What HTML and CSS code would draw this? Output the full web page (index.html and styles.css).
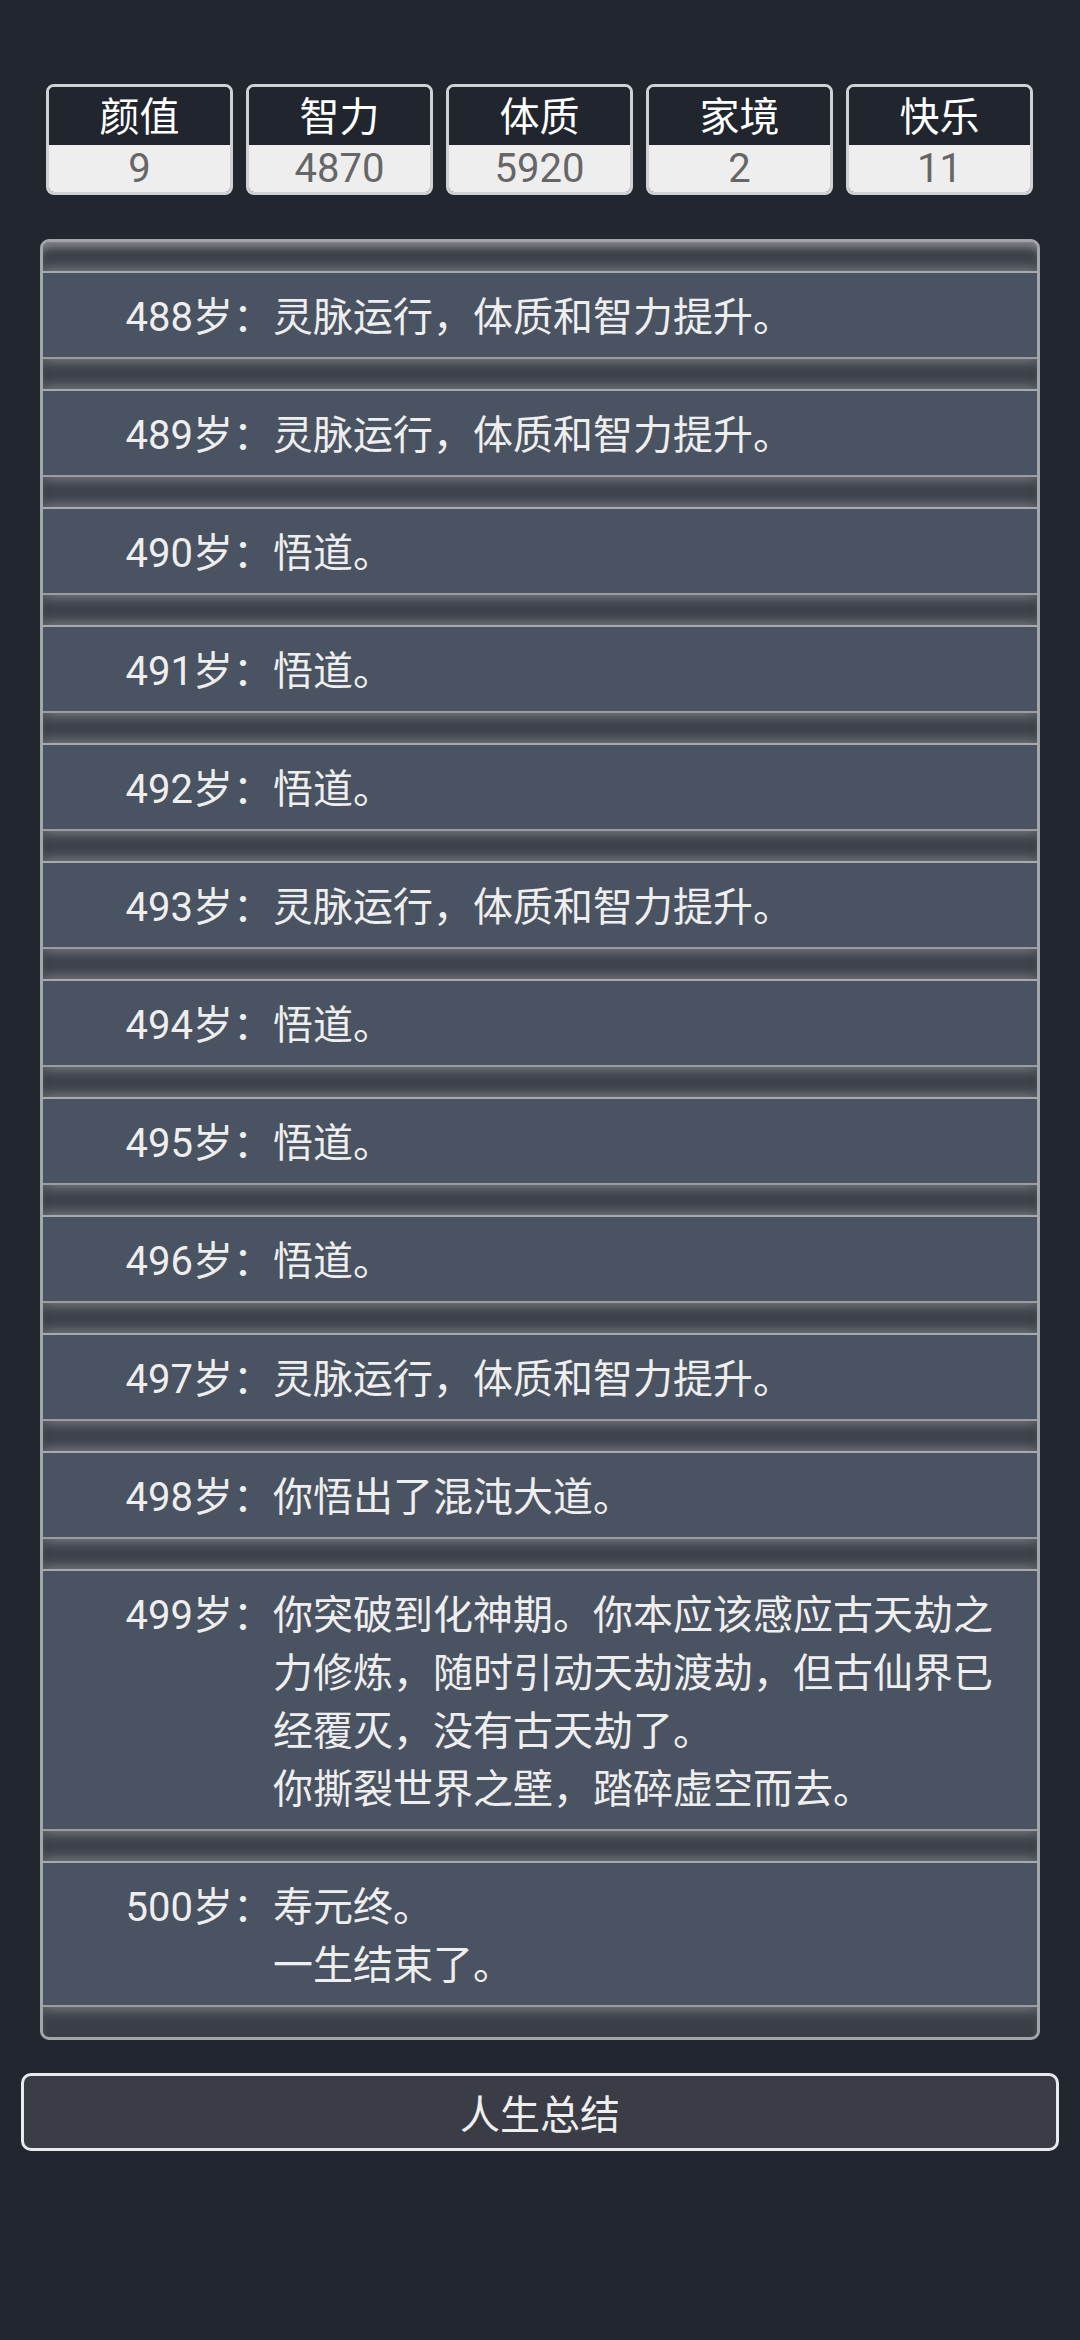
FILE: index.html
```html
<!DOCTYPE html>
<html lang="zh-CN">
<head>
<meta charset="UTF-8" />
<meta name="viewport" content="width=device-width, initial-scale=1" />
<title>人生重开模拟器</title>
<link rel="stylesheet" href="styles.css">
</head>
<body>
<main class="app">
  <div class="stats">
    <div class="stat">
      <div class="stat-name">颜值</div>
      <div class="stat-value">9</div>
    </div>
    <div class="stat">
      <div class="stat-name">智力</div>
      <div class="stat-value">4870</div>
    </div>
    <div class="stat">
      <div class="stat-name">体质</div>
      <div class="stat-value">5920</div>
    </div>
    <div class="stat">
      <div class="stat-name">家境</div>
      <div class="stat-value">2</div>
    </div>
    <div class="stat">
      <div class="stat-name">快乐</div>
      <div class="stat-value">11</div>
    </div>
  </div>

  <ul class="log">
    <li><span class="age">488岁：</span><span class="event">灵脉运行，体质和智力提升。</span></li>
    <li><span class="age">489岁：</span><span class="event">灵脉运行，体质和智力提升。</span></li>
    <li><span class="age">490岁：</span><span class="event">悟道。</span></li>
    <li><span class="age">491岁：</span><span class="event">悟道。</span></li>
    <li><span class="age">492岁：</span><span class="event">悟道。</span></li>
    <li><span class="age">493岁：</span><span class="event">灵脉运行，体质和智力提升。</span></li>
    <li><span class="age">494岁：</span><span class="event">悟道。</span></li>
    <li><span class="age">495岁：</span><span class="event">悟道。</span></li>
    <li><span class="age">496岁：</span><span class="event">悟道。</span></li>
    <li><span class="age">497岁：</span><span class="event">灵脉运行，体质和智力提升。</span></li>
    <li><span class="age">498岁：</span><span class="event">你悟出了混沌大道。</span></li>
    <li><span class="age">499岁：</span><span class="event">你突破到化神期。你本应该感应古天劫之力修炼，随时引动天劫渡劫，但古仙界已经覆灭，没有古天劫了。<br>你撕裂世界之壁，踏碎虚空而去。</span></li>
    <li><span class="age">500岁：</span><span class="event">寿元终。<br>一生结束了。</span></li>
  </ul>

  <button class="summary">人生总结</button>
</main>
</body>
</html>
```

FILE: styles.css
```css
* {
  box-sizing: border-box;
}
body {
  margin: 0;
  padding: 0;
  background: #22262f;
  color: #eeeeee;
  font-family: Roboto, "Noto Sans CJK SC", sans-serif;
  font-size: 40px;
  min-height: 2340px;
}
.app {
  display: flex;
  flex-direction: column;
  padding-top: 84px;
}

/* attribute boxes */
.stats {
  display: grid;
  grid-template-columns: repeat(5, 1fr);
  gap: 13px;
  padding: 0 47px 0 46px;
}
.stat {
  border: 3px solid #cfd1d5;
  border-radius: 8px;
  overflow: hidden;
  text-align: center;
}
.stat-name {
  height: 58px;
  padding-top: 3px;
  line-height: 55px;
  background: #20252e;
  color: #ffffff;
}
.stat-value {
  height: 47px;
  line-height: 47px;
  background: #eeeeee;
  color: #666666;
}

/* life log */
.log {
  list-style: none;
  margin: 44px 40px 0;
  padding: 29px 0 30px;
  border: 3px solid #a2a5a9;
  border-radius: 9px;
  background: #3a3e47;
  box-shadow: inset 0 10px 10px -5px rgba(150, 153, 158, 0.85);
  overflow: hidden;
  display: flex;
  flex-direction: column;
  gap: 30px;
}
.log li {
  display: flex;
  padding: 16px 40px 10px 0;
  line-height: 58px;
  background: #4a5362;
  border-top: 2px solid #a7a9ad;
  border-bottom: 2px solid #9a9ca0;
  box-shadow: 0 0 14px 1px rgba(160, 163, 168, 0.8);
}
.age {
  flex: 0 0 230px;
  text-align: right;
  white-space: nowrap;
}
.event {
  flex: 1;
}

.summary {
  margin: 33px 21px 0;
  height: 78px;
  border: 3px solid #e8eaee;
  border-radius: 10px;
  background: #3a3d46;
  color: #eeeeee;
  font-family: Roboto, "Noto Sans CJK SC", sans-serif;
  font-size: 40px;
  padding: 0;
}
```
